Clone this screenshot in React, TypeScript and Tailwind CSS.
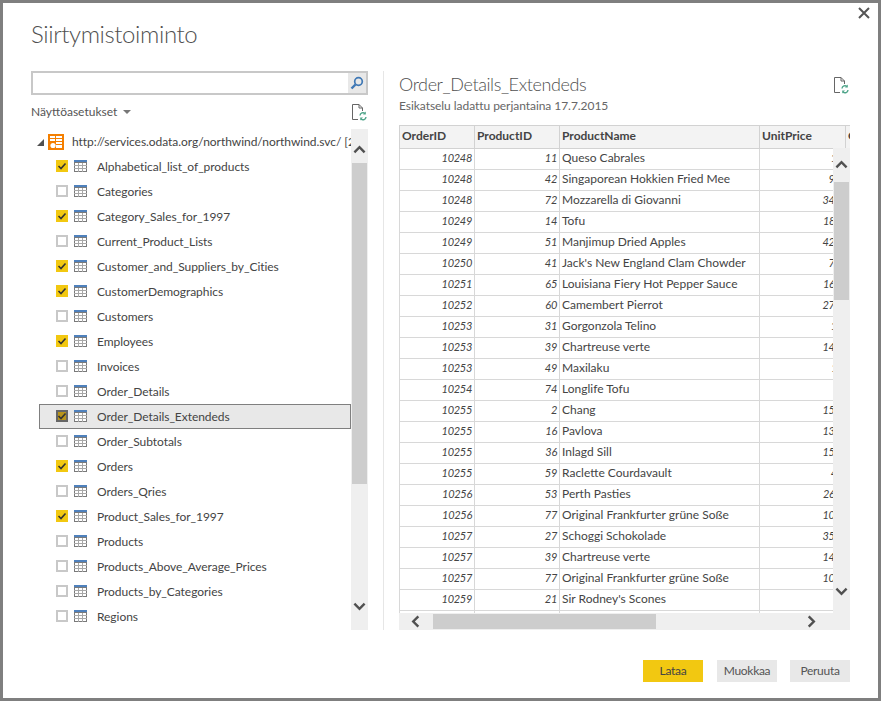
const items: [string, boolean][] = [
  ["Alphabetical_list_of_products", true],
  ["Categories", false],
  ["Category_Sales_for_1997", true],
  ["Current_Product_Lists", false],
  ["Customer_and_Suppliers_by_Cities", true],
  ["CustomerDemographics", true],
  ["Customers", false],
  ["Employees", true],
  ["Invoices", false],
  ["Order_Details", false],
  ["Order_Details_Extendeds", true],
  ["Order_Subtotals", false],
  ["Orders", true],
  ["Orders_Qries", false],
  ["Product_Sales_for_1997", true],
  ["Products", false],
  ["Products_Above_Average_Prices", false],
  ["Products_by_Categories", false],
  ["Regions", false],
];

const rows: [number, number, string, string][] = [
  [10248, 11, "Queso Cabrales", "14"],
  [10248, 42, "Singaporean Hokkien Fried Mee", "9.8"],
  [10248, 72, "Mozzarella di Giovanni", "34.8"],
  [10249, 14, "Tofu", "18.6"],
  [10249, 51, "Manjimup Dried Apples", "42.4"],
  [10250, 41, "Jack's New England Clam Chowder", "7.7"],
  [10251, 65, "Louisiana Fiery Hot Pepper Sauce", "16.8"],
  [10252, 60, "Camembert Pierrot", "27.2"],
  [10253, 31, "Gorgonzola Telino", "10"],
  [10253, 39, "Chartreuse verte", "14.4"],
  [10253, 49, "Maxilaku", "16"],
  [10254, 74, "Longlife Tofu", "8"],
  [10255, 2, "Chang", "15.2"],
  [10255, 16, "Pavlova", "13.9"],
  [10255, 36, "Inlagd Sill", "15.2"],
  [10255, 59, "Raclette Courdavault", "44"],
  [10256, 53, "Perth Pasties", "26.2"],
  [10256, 77, "Original Frankfurter grüne Soße", "10.4"],
  [10257, 27, "Schoggi Schokolade", "35.1"],
  [10257, 39, "Chartreuse verte", "14.4"],
  [10257, 77, "Original Frankfurter grüne Soße", "10.4"],
  [10259, 21, "Sir Rodney's Scones", "8"],
];

function TableIcon() {
  return (
    <svg width="13" height="12" viewBox="0 0 13 12" className="shrink-0 mb-[1px]">
      <rect x="0" y="0" width="13" height="3" fill="#4f81bd" />
      <rect x="0.5" y="2.5" width="12" height="9" fill="#fff" stroke="#7a7a7a" />
      <path d="M0 5.5H13M0 8.5H13M4.5 3V12M8.5 3V12" stroke="#a8a8a8" strokeWidth="1" fill="none" />
    </svg>
  );
}

function CheckBox({ on, selected }: { on: boolean; selected?: boolean }) {
  if (on) {
    return (
      <span className={selected ? "w-3 h-3 mb-[1px] shrink-0 bg-[#b8941a] border-2 border-[#666666] flex items-center justify-center" : "w-3 h-3 mb-[1px] shrink-0 bg-[#f2c811] flex items-center justify-center"}>
        <svg width="10" height="10" viewBox="0 0 10 10" className="shrink-0">
          <path d="M1.5 5L4 7.5L8.5 2.5" fill="none" stroke="#333333" strokeWidth="1.6" />
        </svg>
      </span>
    );
  }
  return <span className="w-3 h-3 mb-[1px] shrink-0 border-2 border-[#c8c8c8] bg-white" />;
}

function DocRefresh() {
  return (
    <svg width="16" height="17" viewBox="0 0 16 17">
      <path d="M7 15.5H1.5V0.5H8L11.5 4V7M8 0.5V4H11.5" fill="none" stroke="#666666" strokeWidth="1" />
      <path d="M9 11.5A3 3 0 0 1 14 9.5M15 13A3 3 0 0 1 10 15" fill="none" stroke="#4fa58a" strokeWidth="1.4" />
      <path d="M14.8 7.5V10.5H12ZM9.2 16.5V13.5H12Z" fill="#4fa58a" />
    </svg>
  );
}

function Chevron({ dir }: { dir: "up" | "down" | "left" | "right" }) {
  const d = {
    up: "M1.5 9L7 3.5L12.5 9",
    down: "M1.5 4L7 9.5L12.5 4",
    left: "M9 1.5L3.5 7L9 12.5",
    right: "M4 1.5L9.5 7L4 12.5",
  }[dir];
  return (
    <svg width="13" height="13" viewBox="0 0 14 14">
      <path d={d} fill="none" stroke="#505050" strokeWidth="2.6" />
    </svg>
  );
}

export default function App() {
  return (
    <div className="w-[881px] h-[701px] border-[3px] border-[#7f7f7f] bg-white relative flex flex-col text-[#444444] font-['Lato','Open_Sans',sans-serif]">
      <button className="absolute right-[8px] top-[4px]">
        <svg width="12" height="12" viewBox="0 0 12 12">
          <path d="M1 1L11 11M11 1L1 11" stroke="#555555" strokeWidth="2" />
        </svg>
      </button>

      <div className="h-[68px] pl-[28px] pt-[13px] text-[24px] tracking-[-0.4px] leading-[36px] font-light text-[#505050]">Siirtymistoiminto</div>

      <div className="flex h-[559px] pl-[28px]">
        <div className="w-[337px] flex flex-col">
          <div className="h-6 border-2 border-[#c8c8c8] flex justify-end">
            <div className="w-[18px] h-5 bg-[#e8e8e8] flex items-center justify-center">
              <svg width="14" height="14" viewBox="0 0 14 14">
                <circle cx="8.5" cy="5.5" r="3.8" fill="none" stroke="#3f78b5" strokeWidth="1.7" />
                <path d="M5.5 8.5L1.5 12.5" stroke="#3f78b5" strokeWidth="2.4" />
              </svg>
            </div>
          </div>
          <div className="h-[34px] flex items-center justify-between">
            <div className="flex items-center gap-[6px] text-[12px] text-[#555555]">
              Näyttöasetukset
              <span className="w-0 h-0 border-x-[4px] border-x-transparent border-t-[4px] border-t-[#777777]" />
            </div>
            <span className="mr-[1px]"><DocRefresh /></span>
          </div>
          <div className="flex-1 relative overflow-hidden">
            <div className="w-[320px] overflow-hidden text-[12px] tracking-[-0.05px] text-[#444444]">
              <div className="h-[25px] pl-[6px] flex items-center whitespace-nowrap">
                <svg width="7" height="7" viewBox="0 0 7 7" className="shrink-0 mt-[1px]">
                  <path d="M7 0V7H0Z" fill="#505050" />
                </svg>
                <svg width="16" height="16" viewBox="0 0 16 16" className="ml-[4px] shrink-0">
                  <rect width="16" height="16" fill="#f47f00" />
                  <path d="M2 2H7V4H2ZM8 2H14V4H8ZM2 5H7V7H2ZM8 5H14V7H8ZM8 8H14V10H8ZM8 11H14V14H8Z" fill="#fff" />
                  <circle cx="5" cy="11.5" r="2.6" fill="#fff" />
                </svg>
                <span className="ml-[8px]">http://services.odata.org/northwind/northwind.svc/ [2]</span>
              </div>
              {items.map(([name, on]) => {
                const sel = name === "Order_Details_Extendeds";
                return (
                  <div
                    key={name}
                    className={
                      sel
                        ? "h-[25px] ml-[8px] w-[312px] pl-[16px] flex items-center border border-[#7f7f7f] bg-[#e8e8e8] whitespace-nowrap"
                        : "h-[25px] ml-[8px] w-[312px] pl-[17px] flex items-center whitespace-nowrap"
                    }
                  >
                    <CheckBox on={on} selected={sel} />
                    <span className="ml-[6px] flex"><TableIcon /></span>
                    <span className="ml-[10px]">{name}</span>
                  </div>
                );
              })}
            </div>
            <div className="absolute right-0 top-0 bottom-0 w-[17px] bg-[#efefef] flex flex-col items-center">
              <div className="h-[34px] flex items-center justify-center pt-[8px]"><Chevron dir="up" /></div>
              <div className="w-[15px] h-[321px] bg-[#cdcdcd]" />
              <div className="flex-1 flex items-end justify-center pb-[17px]"><Chevron dir="down" /></div>
            </div>
          </div>
        </div>

        <div className="ml-[15px] w-px bg-[#e6e6e6]" />

        <div className="ml-[15px] w-[451px] flex flex-col">
          <div className="h-[54px] relative">
            <div className="text-[18px] tracking-[-0.4px] leading-[26px] font-light text-[#505050] whitespace-nowrap">Order_Details_Extendeds</div>
            <div className="text-[12px] tracking-[-0.05px] leading-[18px] text-[#666666] whitespace-nowrap">Esikatselu ladattu perjantaina 17.7.2015</div>
            <span className="absolute right-[1px] top-[6px]"><DocRefresh /></span>
          </div>
          <div className="relative flex-1 overflow-hidden">
            <table className="table-fixed border-collapse w-[490px] text-[12px] text-[#444444]">
              <colgroup>
                <col className="w-[75px]" />
                <col className="w-[85px]" />
                <col className="w-[200px]" />
                <col className="w-[86px]" />
                <col className="w-[44px]" />
              </colgroup>
              <thead>
                <tr className="h-[23px] bg-[#f3f3f3] text-left text-[#444444]">
                  {["OrderID", "ProductID", "ProductName", "UnitPrice", "Quantity"].map((h) => (
                    <th key={h} className="border border-[#d2d2d2] px-[2px] pt-0 pb-[2px] font-bold whitespace-nowrap overflow-hidden">{h}</th>
                  ))}
                </tr>
              </thead>
              <tbody>
                {rows.map((r, i) => (
                  <tr key={i} className="h-[21px]">
                    <td className="border border-[#d8d8d8] px-[2px] pt-0 pb-[2px] text-right italic text-[11px] tracking-[-0.3px]">{r[0]}</td>
                    <td className="border border-[#d8d8d8] px-[2px] pt-0 pb-[2px] text-right italic text-[11px] tracking-[-0.3px]">{r[1]}</td>
                    <td className="border border-[#d8d8d8] px-[2px] pt-0 pb-[2px] whitespace-nowrap overflow-hidden">{r[2]}</td>
                    <td className="border border-[#d8d8d8] px-[2px] pt-0 pb-[2px] text-right italic text-[11px] tracking-[-0.3px]">{r[3]}</td>
                    <td className="border border-[#d8d8d8] px-[2px] pt-0 pb-[2px]" />
                  </tr>
                ))}
                <tr className="h-[21px]">
                  <td className="border border-[#d8d8d8]" />
                  <td className="border border-[#d8d8d8]" />
                  <td className="border border-[#d8d8d8]" />
                  <td className="border border-[#d8d8d8]" />
                  <td className="border border-[#d8d8d8]" />
                </tr>
              </tbody>
            </table>
            <div className="absolute right-0 top-[23px] bottom-0 w-[17px] bg-[#efefef] flex flex-col items-center">
              <div className="h-[34px] flex items-center justify-center"><Chevron dir="up" /></div>
              <div className="w-[15px] h-[118px] bg-[#cdcdcd]" />
              <div className="flex-1 flex items-end justify-center pb-[32px]"><Chevron dir="down" /></div>
            </div>
            <div className="absolute left-0 right-0 bottom-0 h-[17px] bg-[#efefef] flex items-center">
              <div className="w-[34px] flex items-center justify-center"><Chevron dir="left" /></div>
              <div className="w-[223px] h-[15px] bg-[#cdcdcd]" />
              <div className="flex-1 flex items-center justify-end pr-[32px]"><Chevron dir="right" /></div>
            </div>
          </div>
        </div>
      </div>

      <div className="flex justify-end pt-[30px] pr-[28px] text-[12px] tracking-[-0.3px]">
        <button className="w-[60px] h-[22px] bg-[#f2c811] text-[#444444]">Lataa</button>
        <button className="w-[60px] h-[22px] ml-[14px] bg-[#e8e8e8] text-[#555555]">Muokkaa</button>
        <button className="w-[60px] h-[22px] ml-[13px] bg-[#e8e8e8] text-[#555555]">Peruuta</button>
      </div>
    </div>
  );
}
